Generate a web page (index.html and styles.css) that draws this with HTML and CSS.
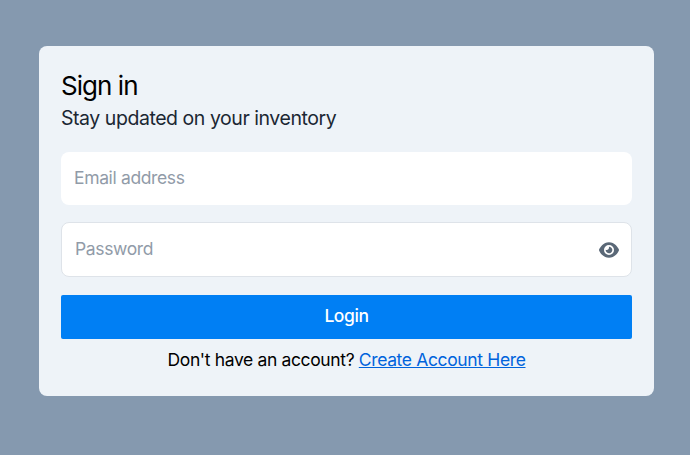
FILE: index.html
```html
<!DOCTYPE html>
<html lang="en">
<head>
<meta charset="utf-8">
<title>Sign in</title>
<link rel="stylesheet" href="styles.css">
</head>
<body>
<main class="card">
  <h1 class="title"><span>Sign in</span></h1>
  <p class="subtitle"><span>Stay updated on your inventory</span></p>
  <form class="form">
    <div class="field field-email"><span class="hint hint-email">Email address</span></div>
    <div class="field field-password"><span class="hint hint-password">Password</span>
      <svg class="eye" viewBox="0 0 576 512" aria-hidden="true"><path d="M288 32c-80.800 0-145.500 36.800-192.600 80.600C48.600 156 17.300 208 2.500 243.700c-3.300 7.900-3.300 16.700 0 24.600C17.300 304 48.600 356 95.400 399.400C142.500 443.200 207.200 480 288 480s145.500-36.800 192.600-80.600c46.800-43.500 78.100-95.400 93-131.100c3.300-7.900 3.300-16.700 0-24.600c-14.900-35.700-46.200-87.700-93-131.100C433.500 68.800 368.800 32 288 32zM144 256a144 144 0 1 1 288 0a144 144 0 1 1-288 0zM288 192c0 35.300-28.700 64-64 64c-7.100 0-13.900-1.200-20.300-3.300c-5.500-1.800-11.900 1.600-11.700 7.400c.3 6.900 1.300 13.800 3.200 20.700c13.700 51.200 66.400 81.600 117.600 67.900s81.600-66.400 67.900-117.600c-11.100-41.500-47.800-69.400-88.600-71.100c-5.800-.2-9.200 6.100-7.400 11.700c2.100 6.400 3.300 13.200 3.300 20.300z"/></svg>
    </div>
    <button class="login" type="button">Login</button>
  </form>
  <p class="signup"><span>Don't have an account?</span> <a class="link" href="#">Create Account Here</a></p>
</main>
</body>
</html>
```

FILE: styles.css
```css
* { box-sizing: border-box; }
body {
  margin: 0;
  height: 455px;
  padding: 46px 36px 0 39px;
  background: #8599af;
  font-family: Inter, "Liberation Sans", sans-serif;
  color: #000;
}
.card {
  height: 350px;
  padding: 22px;
  border-radius: 8px;
  background: #eef3f8;
}
.title, .subtitle, .signup { margin: 0; font-weight: 400; }
.title { font-size: 26px; line-height: 36px; letter-spacing: -0.95px; }
.subtitle { font-size: 19.5px; line-height: 28px; letter-spacing: -0.45px; color: #1b2733; }
.form { margin-top: 20px; }
.field {
  display: flex;
  align-items: center;
  border-radius: 8px;
  background: #fff;
  color: #919ba8;
  font-size: 17.5px;
}
.field-email { height: 53px; padding: 0 13px; }
.field-password {
  justify-content: space-between;
  height: 55px;
  margin-top: 17px;
  padding: 0 12px 0 13px;
  border: 1px solid #dee3e9;
}
.hint { padding-bottom: 2px; letter-spacing: -0.36px; }
.eye { width: 20px; height: 18px; fill: #5a6877; }
.login {
  display: block;
  width: 100%;
  height: 44px;
  margin-top: 18px;
  padding: 0 0 2px;
  border: 0;
  border-radius: 2px;
  background: #007ff4;
  color: #fff;
  font: 500 17.5px/24px Inter, sans-serif;
  letter-spacing: -0.4px;
}
.signup { margin-top: 9px; text-align: center; font-size: 17.5px; line-height: 24px; letter-spacing: -0.36px; }
.link { color: #0063dc; }
```
